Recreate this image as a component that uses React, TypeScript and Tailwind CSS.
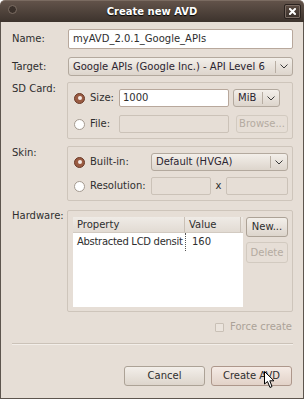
import React from "react";

const font = { fontFamily: '"DejaVu Sans", Verdana, sans-serif' };

function Chevron() {
  return (
    <svg width="8" height="5" viewBox="0 0 8 5">
      <polyline points="0.5,0.5 4,4 7.5,0.5" fill="none" stroke="#3a3a3a" strokeWidth="1" />
    </svg>
  );
}

function Radio({ on }: { on?: boolean }) {
  return on ? (
    <span className="w-[11px] h-[11px] rounded-full border border-[#6b3a28] bg-[#9a5b42] flex items-center justify-center shrink-0">
      <span className="w-[4px] h-[4px] rounded-full bg-[#f4e9e4]" />
    </span>
  ) : (
    <span className="w-[11px] h-[11px] rounded-full border border-[#a49a90] bg-white shrink-0" />
  );
}

function Combo({ text, className }: { text: string; className: string }) {
  return (
    <div
      className={
        "flex items-center rounded-[3px] border border-[#b3a99e] bg-gradient-to-b from-[#f3efea] to-[#ddd5cc] " +
        className
      }
    >
      <span className="flex-1 pl-[4px] text-[#2b2430] whitespace-nowrap overflow-hidden">{text}</span>
      <span className="w-px h-[12px] bg-[#b8aea3]" />
      <span className="w-[16px] flex items-center justify-center">
        <Chevron />
      </span>
    </div>
  );
}

function Btn({
  children,
  className,
  disabled,
  hover,
}: {
  children: React.ReactNode;
  className: string;
  disabled?: boolean;
  hover?: boolean;
}) {
  const look = disabled
    ? "border-[#d2cac0] text-[#b4aba1] bg-[#e6ded6]"
    : hover
    ? "border-[#ad978b] text-[#2e2e2e] bg-gradient-to-b from-[#f5ebe5] to-[#e2d2c8]"
    : "border-[#aca296] text-[#2e2e2e] bg-gradient-to-b from-[#f3efea] to-[#ddd5cc]";
  return (
    <div className={"flex items-center justify-center rounded-[3px] border " + look + " " + className}>
      {children}
    </div>
  );
}

export default function App() {
  return (
    <div className="w-[304px] h-[400px] bg-white text-[10px] leading-[12px] text-[#2e2e2e]" style={font}>
      <div className="w-[304px] h-[399px] flex flex-col">
        {/* Title bar */}
        <div className="h-[22px] shrink-0 rounded-t-[5px] bg-gradient-to-b from-[#62534a] to-[#3d332d] relative flex items-center justify-center border-t border-[#7a6b61]">
          <span className="absolute left-[8px] top-[4px] w-[9px] h-[9px] rounded-full bg-[#3a302a] border border-[#7d6e64]" />
          <span className="font-bold text-white text-[10px] [text-shadow:0_1px_1px_#000]">Create new AVD</span>
          <span className="absolute right-[3px] top-[3px] w-[17px] h-[15px] rounded-[2px] border border-[#2a221e] bg-gradient-to-b from-[#5a4b42] to-[#3a302a] flex items-center justify-center shadow-[inset_0_0_0_1px_#7a6b62]">
            <svg width="7" height="7" viewBox="0 0 7 7">
              <path d="M1 1 L6 6 M6 1 L1 6" stroke="#ffffff" strokeWidth="2" strokeLinecap="square" />
            </svg>
          </span>
        </div>

        {/* Body */}
        <div className="flex-1 bg-[#e6ded6] border-x border-b border-[#5d554e] flex flex-col pl-[11px] pr-[10px] pt-[7px] relative">
          {/* Name */}
          <div className="flex items-center h-[20px]">
            <span className="w-[55px]">Name:</span>
            <div className="ml-[1px] flex-1 h-[20px] bg-white border border-[#b8a89c] rounded-[2px] flex items-center pl-[4px]">
              myAVD_2.0.1_Google_APIs
            </div>
          </div>

          {/* Target */}
          <div className="flex items-center h-[19px] mt-[8px]">
            <span className="w-[55px]">Target:</span>
            <Combo text="Google APIs (Google Inc.) - API Level 6" className="ml-[1px] flex-1 h-[19px]" />
          </div>

          {/* SD Card */}
          <div className="flex items-start mt-[6px]">
            <span className="w-[55px] mt-[1px]">SD Card:</span>
            <div className="flex-1 border border-[#cec5bb] rounded-[2px] pl-[6px] pt-[6px] pb-[5px]">
              <div className="flex items-center h-[18px]">
                <div className="w-[45px] flex items-center gap-[5px]">
                  <Radio on />
                  <span>Size:</span>
                </div>
                <div className="w-[110px] h-[18px] bg-white border border-[#b8a89c] rounded-[2px] flex items-center pl-[3px]">
                  1000
                </div>
                <Combo text="MiB" className="ml-[4px] w-[47px] h-[18px]" />
              </div>
              <div className="flex items-center h-[18px] mt-[8px]">
                <div className="w-[45px] flex items-center gap-[5px]">
                  <Radio />
                  <span>File:</span>
                </div>
                <div className="w-[110px] h-[18px] bg-[#e6ded6] border border-[#cbc2b8] rounded-[2px]" />
                <Btn disabled className="ml-[7px] w-[52px] h-[18px]">
                  Browse...
                </Btn>
              </div>
            </div>
          </div>

          {/* Skin */}
          <div className="flex items-start mt-[7px]">
            <span className="w-[55px] mt-[1px]">Skin:</span>
            <div className="flex-1 border border-[#cec5bb] rounded-[2px] pl-[6px] pt-[6px] pb-[5px]">
              <div className="flex items-center h-[18px]">
                <div className="w-[77px] flex items-center gap-[5px]">
                  <Radio on />
                  <span>Built-in:</span>
                </div>
                <Combo text="Default (HVGA)" className="w-[137px] h-[18px]" />
              </div>
              <div className="flex items-center h-[18px] mt-[6px]">
                <div className="w-[77px] flex items-center gap-[5px]">
                  <Radio />
                  <span>Resolution:</span>
                </div>
                <div className="w-[60px] h-[18px] bg-[#e6ded6] border border-[#cbc2b8] rounded-[2px]" />
                <span className="w-[15px] text-center">x</span>
                <div className="w-[62px] h-[18px] bg-[#e6ded6] border border-[#cbc2b8] rounded-[2px]" />
              </div>
            </div>
          </div>

          {/* Hardware */}
          <div className="flex items-start mt-[9px]">
            <span className="w-[55px]">Hardware:</span>
            <div className="flex-1 border border-[#cec5bb] rounded-[2px] pl-[5px] pt-[6px] pb-[4px] flex items-start">
              <div className="w-[170px] h-[90px] bg-white flex flex-col">
                <div className="h-[16px] flex bg-gradient-to-b from-[#efebe6] to-[#e2dbd3] border-b border-[#d2cac1]">
                  <div className="w-[112px] pl-[4px] flex items-center border-r border-[#c9c0b6]">Property</div>
                  <div className="flex-1 pl-[4px] flex items-center border-r border-[#c9c0b6] mr-[2px]">Value</div>
                </div>
                <div className="h-[18px] flex">
                  <div className="w-[112px] pl-[4px] flex items-center whitespace-nowrap tracking-[-0.3px]">
                    Abstracted LCD densit
                  </div>
                  <div className="flex-1 pl-[6px] flex items-center border-l border-dotted border-[#555]">160</div>
                </div>
              </div>
              <div className="ml-[3px] flex flex-col">
                <Btn className="w-[42px] h-[20px]">New...</Btn>
                <Btn disabled className="w-[42px] h-[21px] mt-[5px]">
                  Delete
                </Btn>
              </div>
            </div>
          </div>

          {/* Force create */}
          <div className="flex items-center justify-end h-[12px] mt-[9px] pr-[1px] text-[#aba298]">
            <span className="w-[9px] h-[9px] border border-[#c9c0b6] rounded-[1px] bg-[#ebe4dd]" />
            <span className="ml-[6px]">Force create</span>
          </div>

          {/* Separator */}
          <div className="h-px bg-[#cbc2b8] mt-[10px] shadow-[0_1px_0_#f3eee9]" />

          {/* Buttons */}
          <div className="flex justify-end mt-[22px] gap-[6px] pr-[1px]">
            <Btn className="w-[81px] h-[20px]">Cancel</Btn>
            <Btn hover className="w-[81px] h-[20px]">
              Create AVD
            </Btn>
          </div>

          {/* Mouse cursor overlay */}
          <svg
            className="absolute left-[263px] top-[349px]"
            width="12"
            height="18"
            viewBox="0 0 12 18"
          >
            <path
              d="M0.5 0.5 L0.5 13 L3.5 10.5 L6 16.5 L8 15.5 L5.8 9.8 L10 9.8 Z"
              fill="#ffffff"
              stroke="#000000"
              strokeWidth="1"
              strokeLinejoin="round"
            />
          </svg>
        </div>
      </div>
    </div>
  );
}
